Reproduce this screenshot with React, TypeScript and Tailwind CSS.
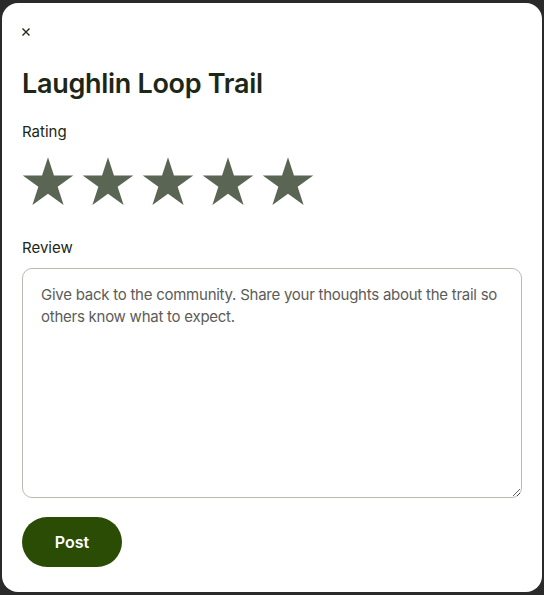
import React from "react";

const Star: React.FC = () => (
  <svg width="52" height="50" viewBox="0 0 24 23" className="fill-[#5b6553]">
    <path d="M12 0.5l2.75 8.45h8.9l-7.2 5.23 2.75 8.45L12 17.4l-7.2 5.23 2.75-8.45-7.2-5.23h8.9z" />
  </svg>
);

const App: React.FC = () => (
  <div className="h-[595px] w-[544px] bg-[#2a2a2a] px-[2px] pt-[3px] pb-[3px] font-['Inter',sans-serif]">
    <div className="flex h-[589px] flex-col rounded-2xl bg-white px-5 pt-[25px]">
      <button className="flex h-2 w-2 items-center justify-center text-[#1f2a17]" aria-label="Close">
        <svg width="8" height="8" viewBox="0 0 8 8" stroke="currentColor" strokeWidth="1.4">
          <path d="M0.5 0.5l7 7M7.5 0.5l-7 7" />
        </svg>
      </button>
      <h1 className="mt-[32px] text-[27px] leading-8 font-semibold tracking-[-0.3px] text-[#1c2716]">
        Laughlin Loop Trail
      </h1>
      <p className="mt-[22px] text-[15px] leading-5 text-[#1c2716]">Rating</p>
      <div className="mt-[14px] flex gap-2">
        <Star />
        <Star />
        <Star />
        <Star />
        <Star />
      </div>
      <p className="mt-[32px] text-[15px] leading-5 text-[#1c2716]">Review</p>
      <textarea
        className="mt-[10px] h-[230px] w-[500px] rounded-[10px] border border-[#b9b9b1] py-[15px] pr-3 pl-[18px] text-[15px] leading-[22px] tracking-[-0.25px] text-[#1c2716] placeholder:text-[#5c5c58] outline-none"
        placeholder="Give back to the community. Share your thoughts about the trail so others know what to expect."
      />
      <button className="mt-[19px] h-[50px] w-[100px] rounded-full bg-[#2a4c05] text-[16px] font-semibold text-white">
        Post
      </button>
    </div>
  </div>
);

export default App;
